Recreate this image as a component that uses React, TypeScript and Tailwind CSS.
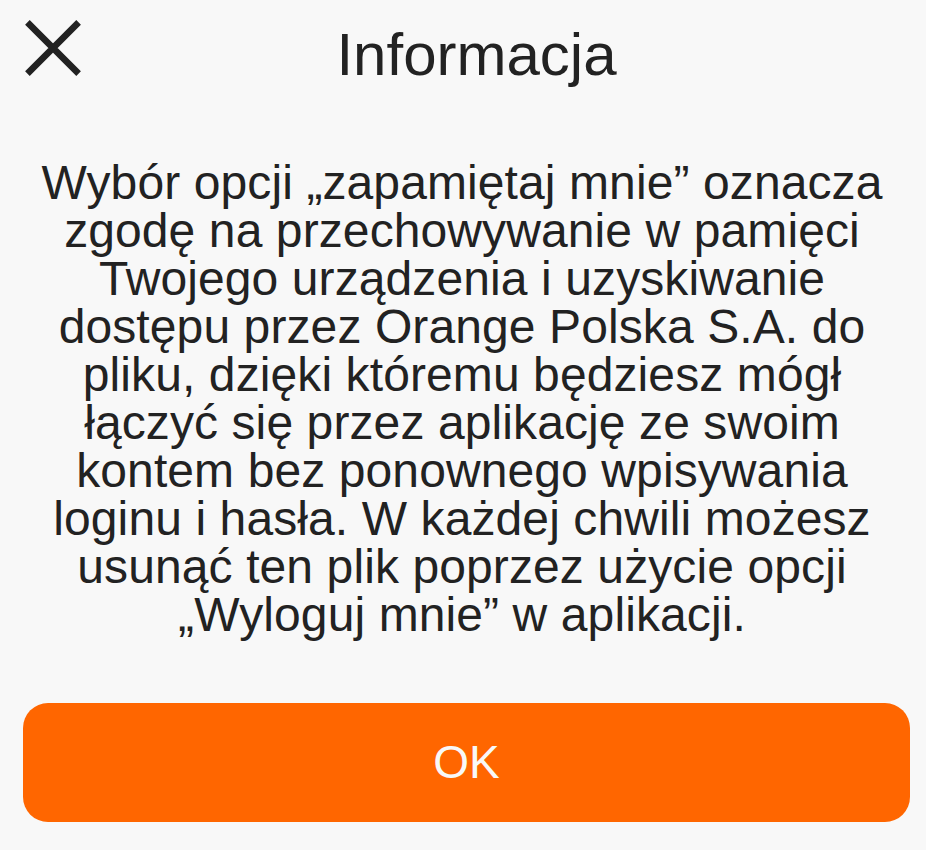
const lines = [
  'Wybór opcji „zapamiętaj mnie” oznacza',
  'zgodę na przechowywanie w pamięci',
  'Twojego urządzenia i uzyskiwanie',
  'dostępu przez Orange Polska S.A. do',
  'pliku, dzięki któremu będziesz mógł',
  'łączyć się przez aplikację ze swoim',
  'kontem bez ponownego wpisywania',
  'loginu i hasła. W każdej chwili możesz',
  'usunąć ten plik poprzez użycie opcji',
  '„Wyloguj mnie” w aplikacji.',
];

const InfoDialog = () => {
  return (
    <div
      className="w-[926px] h-[850px] bg-[#f8f8f8] text-[#222222] flex flex-col overflow-hidden"
      style={{ fontFamily: '"Liberation Sans", Arial, sans-serif' }}
    >
      {/* header */}
      <div className="relative pt-[25px] pl-[27px]">
        <button className="absolute left-[25px] top-[20px] w-[56px] h-[56px]" aria-label="Zamknij">
          <svg width="56" height="56" viewBox="0 0 56 56">
            <path d="M2.4 2.4 L53.6 53.6 M53.6 2.4 L2.4 53.6" stroke="#222222" strokeWidth="6.5" fill="none" />
          </svg>
        </button>
        <h1 className="text-center text-[60px] leading-[60px] font-normal">Informacja</h1>
      </div>

      {/* body */}
      <div className="mt-[74px] pl-[16px] pr-[18px] text-center text-[48px] leading-[48px] tracking-[0.1px]">
        {lines.map((l) => (
          <div key={l} className="whitespace-nowrap">{l}</div>
        ))}
      </div>

      {/* action */}
      <div className="mt-[64px] pl-[23px] pr-[16px]">
        <button className="w-full h-[119px] rounded-[25px] bg-[#ff6600] text-[#f8f8f8] text-[46px] flex items-center justify-center">
          OK
        </button>
      </div>
    </div>
  );
};

export default function App() {
  return <InfoDialog />;
}
